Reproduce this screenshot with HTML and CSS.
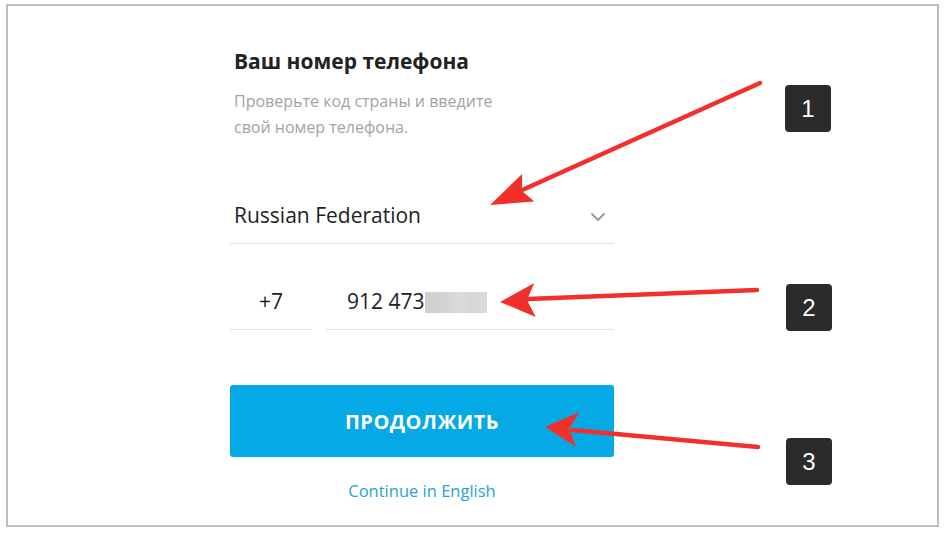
FILE: index.html
```html
<!DOCTYPE html>
<html lang="ru">
<head>
<meta charset="utf-8">
<title>Ваш номер телефона</title>
<link rel="stylesheet" href="styles.css">
</head>
<body>
<div class="frame">
  <div class="form">
    <h1 class="title">Ваш номер телефона</h1>
    <p class="subtitle">Проверьте код страны и введите<br>свой номер телефона.</p>
    <div class="select">
      <span class="select-text">Russian Federation</span>
      <svg class="chevron" width="16" height="10" viewBox="0 0 16 10"><path d="M1.5 1.5 L8 8 L14.5 1.5" fill="none" stroke="#9a9a9a" stroke-width="2"/></svg>
    </div>
    <div class="phone">
      <div class="code">+7</div>
      <div class="number"><span>912 473</span><span class="blur"></span></div>
    </div>
    <button class="submit">ПРОДОЛЖИТЬ</button>
    <a class="link" href="#">Continue in English</a>
  </div>
</div>
<div class="badge b1">1</div>
<div class="badge b2">2</div>
<div class="badge b3">3</div>
<svg class="arrows" width="944" height="533" viewBox="0 0 944 533">
  <g stroke="#f2302b" stroke-width="4.5" stroke-linecap="round" fill="none">
    <line x1="760" y1="83" x2="520" y2="191"/>
    <line x1="757" y1="290" x2="528" y2="299"/>
    <line x1="758" y1="447" x2="572" y2="430"/>
  </g>
  <g fill="#f2302b">
    <polygon points="490,205 534.5,201.4 522,191 522.1,174"/>
    <polygon points="500,302 535.7,317 527,300 534.3,283"/>
    <polygon points="545,427 576.3,447 569,429 579.5,412"/>
  </g>
</svg>
</body>
</html>
```

FILE: styles.css
```css
* { box-sizing: border-box; }
html, body { margin: 0; padding: 0; }
body {
  position: relative;
  width: 944px;
  height: 533px;
  background: #fff;
  font-family: "Open Sans", "Liberation Sans", sans-serif;
  overflow: hidden;
}
.frame {
  margin: 4px 5px 6px 6px;
  height: 523px;
  border: 2px solid #bdbdbd;
  padding: 42px 0 0 222px;
}
.form {
  width: 384px;
  display: flex;
  flex-direction: column;
}
.title {
  margin: 0 0 0 4px;
  font-size: 21px;
  line-height: 26px;
  font-weight: 700;
  color: #222;
}
.subtitle {
  margin: 14px 0 0 4px;
  font-size: 16px;
  line-height: 26px;
  color: #a3a3a3;
}
.select {
  margin-top: 62px;
  display: flex;
  align-items: center;
  justify-content: space-between;
  padding: 0 8px 15px 4px;
  border-bottom: 1.5px solid #e3e3e3;
}
.select-text {
  font-size: 21px;
  line-height: 26px;
  color: #222;
}
.chevron { margin-top: 4px; }
.phone {
  margin-top: 44px;
  display: flex;
  gap: 14px;
}
.code, .number {
  font-size: 21px;
  line-height: 26px;
  color: #222;
  padding-bottom: 15px;
  border-bottom: 1.5px solid #e3e3e3;
}
.code {
  width: 82px;
  text-align: center;
}
.number {
  flex: 1;
  padding-left: 21px;
  display: flex;
  align-items: center;
}
.blur {
  display: inline-block;
  width: 62px;
  height: 21px;
  margin-top: 2px;
  background: linear-gradient(90deg, #cfcfcf 0, #d4d4d4 35%, #dcdcdc 55%, #d6d6d6 75%, #dadada 100%);
}
.submit {
  margin-top: 55px;
  height: 72px;
  border: 0;
  border-radius: 3px;
  background: #05a9e6;
  color: #fff;
  font-family: "Open Sans", "Liberation Sans", sans-serif;
  font-size: 20px;
  font-weight: 700;
  letter-spacing: 0.5px;
}
.link {
  margin-top: 24px;
  text-align: center;
  font-size: 16.5px;
  line-height: 20px;
  color: #2a9fd8;
  text-decoration: none;
}
.badge {
  position: absolute;
  width: 46px;
  height: 47px;
  border-radius: 4px;
  background: #2b2b2b;
  color: #fff;
  font-family: "Liberation Sans", Arial, sans-serif;
  font-size: 24px;
  line-height: 47px;
  text-align: center;
}
.b1 { left: 785px; top: 85px; }
.b2 { left: 786px; top: 284px; }
.b3 { left: 786px; top: 438px; }
.arrows {
  position: absolute;
  left: 0;
  top: 0;
}
```
